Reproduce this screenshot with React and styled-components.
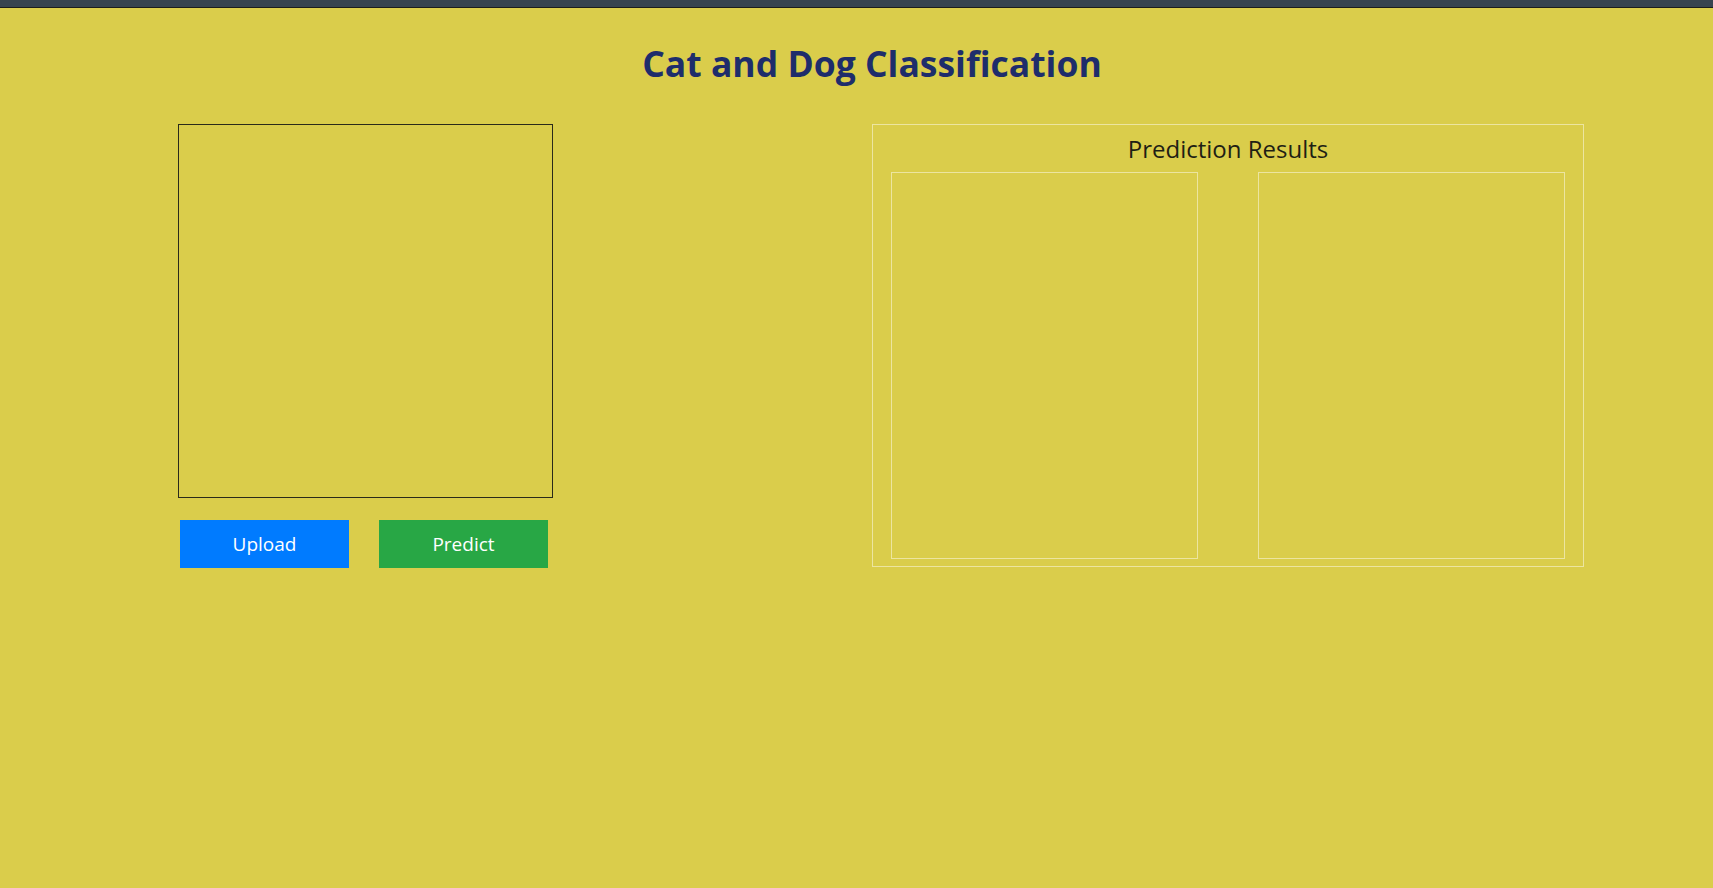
import React from "react";
import styled, { createGlobalStyle } from "styled-components";

const Global = createGlobalStyle`
  html, body { margin: 0; padding: 0; }
  body {
    background: #dacd4b;
    font-family: "Open Sans", "Noto Sans", sans-serif;
    min-height: 888px;
  }
`;

const TopBar = styled.div`
  height: 7px;
  background: #37444f;
  border-bottom: 1px solid #1b1d1c;
`;

const Title = styled.h1`
  margin: 0;
  padding: 33px 0 0 31px;
  height: 116px;
  box-sizing: border-box;
  text-align: center;
  font-size: 35.5px;
  line-height: 44px;
  font-weight: 700;
  color: #1e2d6b;
`;

const Main = styled.div`
  display: flex;
  align-items: flex-start;
  padding-left: 178px;
`;

const LeftCol = styled.div`
  width: 375px;
  display: flex;
  flex-direction: column;
`;

const ImageBox = styled.div`
  width: 375px;
  height: 374px;
  box-sizing: border-box;
  border: 1px solid #2a2a1a;
`;

const ButtonRow = styled.div`
  display: flex;
  gap: 30px;
  margin-top: 22px;
  padding-left: 2px;
`;

const Button = styled.button`
  width: 169px;
  height: 48px;
  border: none;
  border-radius: 0;
  background: ${(p) => p.$bg};
  color: #ffffff;
  font-family: "Open Sans", "Noto Sans", sans-serif;
  font-size: 19px;
  cursor: pointer;
  padding: 0;
`;

const ResultsPanel = styled.div`
  margin-left: 319px;
  width: 712px;
  height: 443px;
  box-sizing: border-box;
  border: 1px solid #ece5a0;
  display: flex;
  flex-direction: column;
  padding: 0 18px 7px;
`;

const ResultsTitle = styled.h2`
  margin: 0;
  height: 47px;
  text-align: center;
  font-size: 24px;
  font-weight: 400;
  line-height: 47px;
  color: #1f1f14;
`;

const ResultsRow = styled.div`
  flex: 1;
  display: flex;
  justify-content: space-between;
`;

const ResultBox = styled.div`
  width: 307px;
  box-sizing: border-box;
  border: 1px solid #ece5a0;
`;

export default function App() {
  return (
    <>
      <Global />
      <TopBar />
      <Title>Cat and Dog Classification</Title>
      <Main>
        <LeftCol>
          <ImageBox />
          <ButtonRow>
            <Button $bg="#007bff">Upload</Button>
            <Button $bg="#28a745">Predict</Button>
          </ButtonRow>
        </LeftCol>
        <ResultsPanel>
          <ResultsTitle>Prediction Results</ResultsTitle>
          <ResultsRow>
            <ResultBox />
            <ResultBox />
          </ResultsRow>
        </ResultsPanel>
      </Main>
    </>
  );
}
